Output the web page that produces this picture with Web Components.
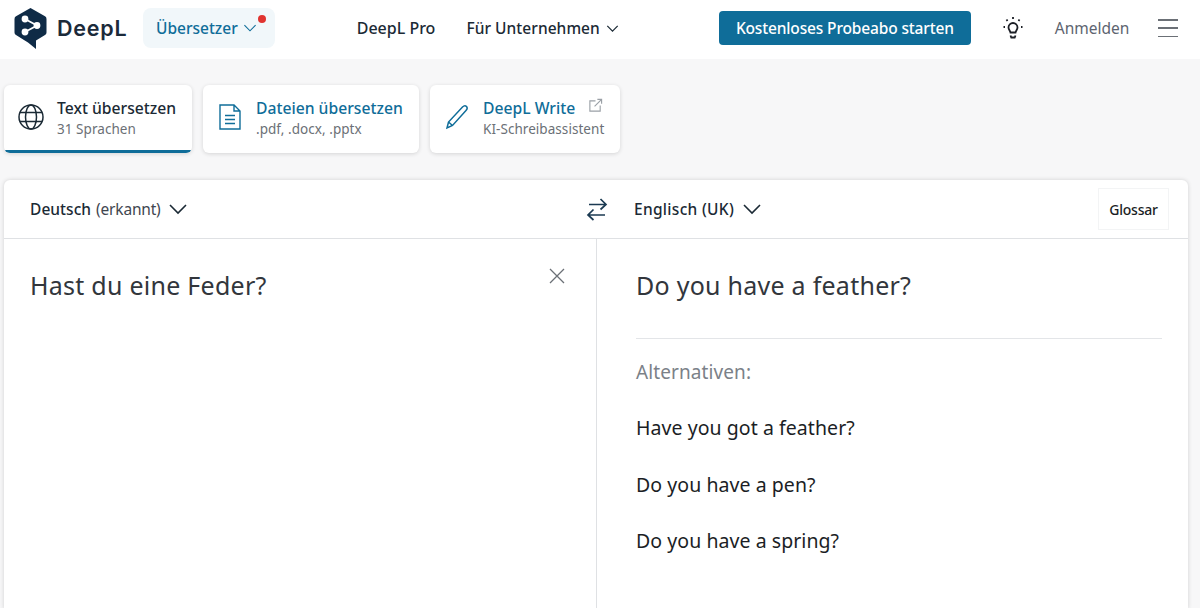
<!DOCTYPE html>
<html lang="de"><head><meta charset="utf-8"><title>DeepL</title>
<style>
html,body{margin:0;height:608px;overflow:hidden;background:#f7f7f8;font-family:"Noto Sans","Open Sans",sans-serif;color:#1b1e25}
</style></head><body>
<dl-app></dl-app>
<script>
const ic={
chev:(s,c,w=1.6)=>`<svg width="${s}" height="${s}" viewBox="0 0 20 20" fill="none" stroke="${c}" stroke-width="${w}"><path d="M2 6l8 8 8-8"/></svg>`,
globe:`<svg width="28" height="28" viewBox="0 0 28 28" fill="none" stroke="#1b2a35" stroke-width="1.5"><circle cx="14" cy="14" r="12"/><ellipse cx="14" cy="14" rx="5.500" ry="12"/><path d="M3 9.500h22M3 18.500h22"/></svg>`,
doc:`<svg width="24" height="28" viewBox="0 0 24 28" fill="none" stroke="#0f6d99" stroke-width="1.4"><path d="M2 2h14l6 6v18H2zM16 2v6h6M7 12.500h10M7 16.500h10M7 20.500h10"/></svg>`,
pen:`<svg width="26" height="28" viewBox="0 0 26 28" fill="none" stroke="#0f6d99" stroke-width="1.5"><path d="M3 25l1.500-6L18.500 4c1.500-1.500 3-1.500 4-.5s1 2.500-.5 4L8.500 22.500zM4.500 19l4 3.500"/></svg>`,
ext:`<svg style="margin-left:13px;vertical-align:1px" width="15" height="15" viewBox="0 0 16 16" fill="none" stroke="#9aa0a6" stroke-width="1.2"><path d="M8 3H2v11h11V8M7 9l7.500-7.500M10 1.500h4.500V6"/></svg>`,
swap:`<svg width="22" height="26" viewBox="0 0 22 26" fill="none" stroke="#1b3a52" stroke-width="1.7"><path d="M3 8.500h17M14.500 3 20 8.500l-5.500 5"/><path d="M19 19H2M7.500 13.500 2 19l5.500 5"/></svg>`,
close:`<svg width="16" height="16" viewBox="0 0 16 16" fill="none" stroke="#6b7076" stroke-width="1.3"><path d="M1 1l14 14M15 1 1 15"/></svg>`,
bulb:`<svg width="22" height="24" viewBox="0 0 22 24" fill="none" stroke="#1b1e25" stroke-width="1.800"><path d="M6.500 11.500a4.500 4.500 0 1 1 9 0c0 2-1.700 3-2 5H8.500c-.3-2-2-3-2-5zM8.500 19.500l.8 2h3.400l.8-2"/><path d="M11 1v2M4.500 3.500l1 1.500M17.500 3.500l-1 1.500M1.500 11H3M19 11h1.500"/></svg>`,
logo:`<svg width="33" height="41" viewBox="0 0 33 41"><path d="M16.500 0 31 8.300a3 3 0 0 1 1.500 2.600v13.600a3 3 0 0 1-1.500 2.600L22 32.500V41l-8-6.500L2 27.100A3 3 0 0 1 .5 24.500V10.900a3 3 0 0 1 1.500-2.600z" fill="#0f2b46"/><g stroke="#fff" stroke-width="1.800" fill="#fff"><path d="M11 11l12 6.500L11 24" fill="none"/><circle cx="11" cy="11" r="2.500"/><circle cx="23" cy="17.500" r="2.500"/><circle cx="11" cy="24" r="2.500"/></g></svg>`
};
function def(n,html){customElements.define(n,class extends HTMLElement{constructor(){super();this.attachShadow({mode:"open"}).innerHTML=typeof html==="function"?html(this):html}})}

def("dl-header",`<style>
:host{display:flex;align-items:center;height:59px;padding-bottom:3px;background:#fff;box-sizing:border-box;font-size:15.500px}
.logo{display:flex;align-items:center;margin-left:14px;width:129px;gap:10px;font:600 21.500px Inter,sans-serif;color:#1b2a3a;letter-spacing:.8px}
.logo svg{flex:none;margin-top:1px}
.tr{position:relative;display:flex;align-items:center;gap:5px;height:40px;padding:0 18px 0 13px;background:#f1f7fa;border-radius:8px;color:#0f6d99;font-weight:500;letter-spacing:0}
.dot{position:absolute;top:7px;right:9px;width:8px;height:8px;border-radius:50%;background:#e0332f}
.nav{color:#1b2a35;font-weight:500}
.pro{margin-left:82px;font-size:16px}.biz{margin-left:31px;display:flex;align-items:center;gap:6px;letter-spacing:.05px}
.cta{margin-left:100px;height:34px;width:252px;display:flex;align-items:center;justify-content:center;background:#0f6d99;border-radius:4px;color:#fff;font-weight:500;letter-spacing:-.15px}
.bulb{margin-left:31px;display:flex}
.login{margin-left:31px;color:#5d6470;letter-spacing:0}
.menu{margin-left:29px;width:20px;height:18px;display:flex;flex-direction:column;justify-content:space-between}
.menu i{display:block;height:1.500px;background:#6b7076}
</style>
<div class="logo">${ic.logo}<span>DeepL</span></div>
<div class="tr">Übersetzer ${ic.chev(14,"#0f6d99")}<span class="dot"></span></div>
<div class="nav pro">DeepL Pro</div>
<div class="nav biz">Für Unternehmen ${ic.chev(13,"#1b2a35",1.9)}</div>
<div class="cta">Kostenloses Probeabo starten</div>
<div class="bulb">${ic.bulb}</div>
<div class="login">Anmelden</div>
<div class="menu"><i></i><i></i><i></i></div>`);

def("dl-tab",el=>{const a=el.hasAttribute("active");return `<style>
:host{display:flex;align-items:center;height:68px;box-sizing:border-box;background:#fff;border-radius:6px;box-shadow:0 1px 4px rgba(0,0,0,.14);position:relative;overflow:hidden;font-size:15.700px}
.ic{margin-left:${el.getAttribute("il")||14}px;width:${el.getAttribute("iw")||39}px;display:flex;flex:none}
.txt{margin-top:-3px}
.t{font-weight:500;color:${a?"#1b2a35":"#0f6d99"};line-height:22px;letter-spacing:0;display:flex;align-items:center}
.s{font-size:13.500px;line-height:20px;color:#6b7076;letter-spacing:.05px}
.bar{position:absolute;left:0;right:0;bottom:0;height:3px;background:#0f6d99;display:${a?"block":"none"}}
</style><div class="ic"><slot name="i"></slot></div><div class="txt"><div class="t"><slot name="t"></slot></div><div class="s"><slot name="s"></slot></div></div><div class="bar"></div>`});

def("dl-tabs",`<style>:host{display:flex;gap:11px;margin:26px 0 0 4px}</style><slot></slot>`);

def("dl-card",`<style>
:host{display:block;margin:27px 12px 0 4px;height:429px;background:#fff;border-radius:6px 6px 0 0;box-shadow:0 0 4px rgba(0,0,0,.16)}
.top{display:flex;align-items:center;height:58px;border-bottom:1px solid #dfe1e4;font-size:15.500px}
.l{flex:none;width:593px;display:flex;align-items:center;box-sizing:border-box;padding-left:26px;gap:8px}
.r{flex:1;display:flex;align-items:center;gap:8px;padding-left:37px}
b{font-weight:500;letter-spacing:.05px;color:#1b2a35}em{font-style:normal;color:#3f4650;letter-spacing:-.2px}
.en{letter-spacing:.3px}
.swap{margin-left:auto;margin-right:-11px;display:flex}
.gl{margin-left:auto;margin-right:19px;width:71px;height:42px;display:flex;align-items:center;justify-content:center;font-size:14px;font-weight:500;letter-spacing:-.2px;border:1px solid #f3f4f5;box-sizing:border-box}
.body{display:flex;height:370px;overflow:hidden}
.src{width:593px;box-sizing:border-box;border-right:1px solid #dfe1e4;padding:27px 0 0 26px;position:relative;font-size:25px;line-height:38px;color:#32363c;letter-spacing:.26px}
.x{position:absolute;left:545px;top:29px;display:flex}
.dst{flex:1;padding:27px 26px 0 39px;font-size:25px;line-height:38px;color:#32363c;letter-spacing:.26px}
.dst hr{border:0;border-top:1px solid #e3e5e8;margin:34px 0 0}
.alt-h{font-size:19px;color:#7b8188;margin-top:19px;line-height:28px;letter-spacing:.1px}
.a{font-size:19.500px;color:#1b1e25;line-height:28px;margin-top:28.500px;letter-spacing:.06px}
.alt-h + .a{margin-top:28px}
</style>
<div class="top">
<div class="l"><b>Deutsch</b> <em style="margin-left:-3px">(erkannt)</em>${ic.chev(20,"#1b2a35")}<span class="swap">${ic.swap}</span></div>
<div class="r"><b class="en">Englisch (UK)</b>${ic.chev(20,"#1b2a35")}<div class="gl">Glossar</div></div>
</div>
<div class="body"><div class="src">Hast du eine Feder?<span class="x">${ic.close}</span></div>
<div class="dst">Do you have a feather?<hr><div class="alt-h">Alternativen:</div>
<div class="a">Have you got a feather?</div><div class="a">Do you have a pen?</div><div class="a">Do you have a spring?</div></div></div>`);

def("dl-app",`<style>:host{display:block}</style>
<dl-header></dl-header>
<dl-tabs>
<dl-tab active style="width:188px" il="13" iw="40"><span slot="i">${ic.globe}</span><span slot="t">Text übersetzen</span><span slot="s">31 Sprachen</span></dl-tab>
<dl-tab style="width:216px" il="15" iw="38"><span slot="i">${ic.doc}</span><span slot="t">Dateien übersetzen</span><span slot="s">.pdf, .docx, .pptx</span></dl-tab>
<dl-tab style="width:190px" il="14" iw="39"><span slot="i">${ic.pen}</span><span slot="t">DeepL Write${ic.ext}</span><span slot="s">KI-Schreibassistent</span></dl-tab>
</dl-tabs>
<dl-card></dl-card>`);
</script></body></html>
